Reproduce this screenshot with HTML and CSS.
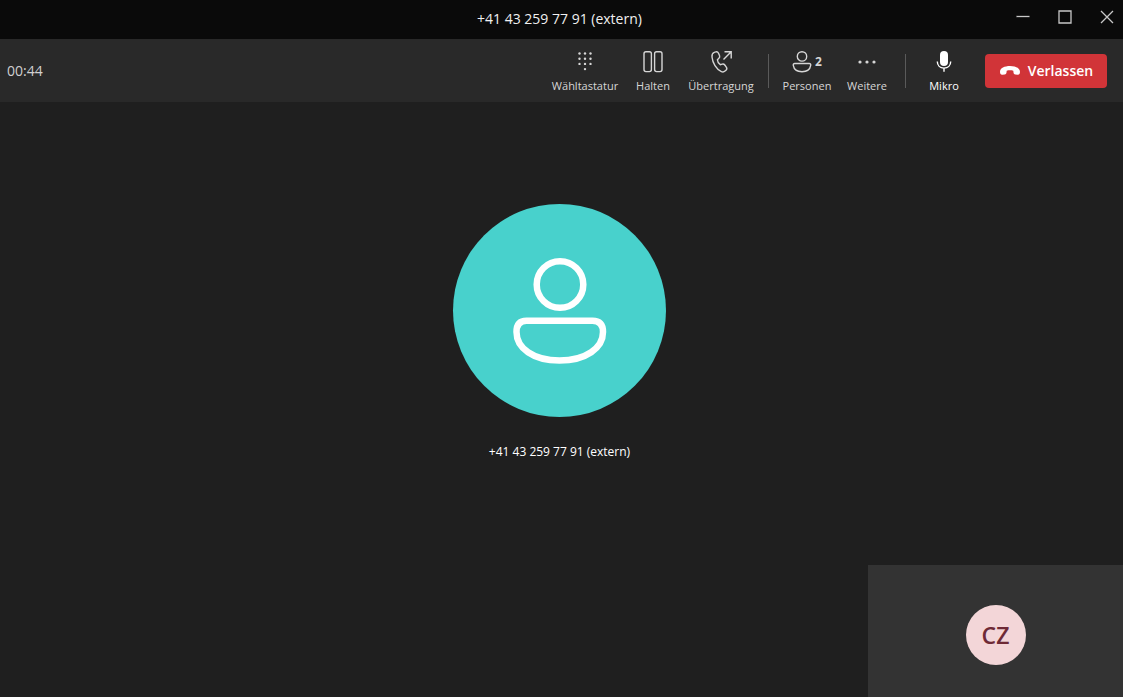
FILE: index.html
```html
<!DOCTYPE html>
<html lang="de">
<head>
<meta charset="utf-8">
<title>+41 43 259 77 91 (extern)</title>
<link rel="stylesheet" href="styles.css">
</head>
<body>
<div class="window">
  <header class="titlebar">
    <h1 class="titlebar-title">+41 43 259 77 91 (extern)</h1>
    <div class="window-controls">
      <button class="window-button" aria-label="Minimieren"><svg width="14" height="14" viewBox="0 0 14 14"><path d="M0.5 6.5h13"/></svg></button>
      <button class="window-button" aria-label="Maximieren"><svg width="14" height="14" viewBox="0 0 14 14"><path d="M1 1h12v12H1z"/></svg></button>
      <button class="window-button" aria-label="Schließen"><svg width="14" height="14" viewBox="0 0 14 14"><path d="M1 1l12 12M13 1L1 13"/></svg></button>
    </div>
  </header>

  <div class="toolbar">
    <time class="timer">00:44</time>
    <div class="tools">
      <div class="tool-group tool-group-call">
        <button class="tool">
          <svg class="tool-icon" width="24" height="24" viewBox="0 0 24 24"><g class="solid"><circle cx="6.500" cy="3.500" r="1.200"/><circle cx="12" cy="3.500" r="1.200"/><circle cx="17.500" cy="3.500" r="1.200"/><circle cx="6.500" cy="8.700" r="1.200"/><circle cx="12" cy="8.700" r="1.200"/><circle cx="17.500" cy="8.700" r="1.200"/><circle cx="6.500" cy="13.900" r="1.200"/><circle cx="12" cy="13.900" r="1.200"/><circle cx="17.500" cy="13.900" r="1.200"/><circle cx="12" cy="19.100" r="1.200"/></g></svg>
          <span class="tool-label">Wähltastatur</span>
        </button>
        <button class="tool">
          <svg class="tool-icon" width="24" height="24" viewBox="0 0 24 24"><rect x="3" y="1.800" width="7.400" height="19.800" rx="2"/><rect x="13.600" y="1.800" width="7.400" height="19.800" rx="2"/></svg>
          <span class="tool-label">Halten</span>
        </button>
        <button class="tool">
          <svg class="tool-icon" width="24" height="24" viewBox="0 0 24 24"><path d="M5.300 2.300l1.300-.4c1.200-.4 2.400.2 2.900 1.300l1 2.400c.4 1 .2 2-.6 2.700l-1.500 1.400c.1 1.500 1.500 4.100 2.900 5l1.900-.6c1-.3 2 .1 2.600.9l1.500 2.100c.7 1 .6 2.300-.3 3.100l-1 .9c-1 .9-2.400 1.100-3.600.5-5.200-2.500-8.800-8.700-9.400-14.600-.2-2 .6-4.100 2.300-4.700z"/><path d="M14.500 9.500L22.200 1.800M15.500 1.800h6.700v6.700"/></svg>
          <span class="tool-label">Übertragung</span>
        </button>
      </div>
      <div class="separator"></div>
      <div class="tool-group">
        <button class="tool tool-narrow">
          <span class="people">
            <svg class="tool-icon" width="20" height="24" viewBox="0 0 20 24"><circle cx="10" cy="6.400" r="4.700"/><path d="M2.800 13.500h14.400c1.100 0 1.700.8 1.500 1.900-.6 3.800-4 6.300-8.700 6.300s-8.100-2.500-8.700-6.300c-.2-1.100.4-1.900 1.500-1.900z"/></svg>
            <span class="people-count">2</span>
          </span>
          <span class="tool-label">Personen</span>
        </button>
        <button class="tool tool-narrow">
          <svg class="tool-icon" width="24" height="24" viewBox="0 0 24 24"><g class="solid"><circle cx="5" cy="12" r="1.600"/><circle cx="12" cy="12" r="1.600"/><circle cx="19" cy="12" r="1.600"/></g></svg>
          <span class="tool-label">Weitere</span>
        </button>
      </div>
      <div class="separator"></div>
      <button class="tool tool-narrow tool-active">
        <svg class="tool-icon" width="24" height="24" viewBox="0 0 24 24"><rect class="solid" x="8" y="1" width="8" height="15" rx="4"/><path d="M5.300 11.500c0 4 2.700 6.600 6.700 6.600s6.700-2.600 6.700-6.600M12 18v3.800"/></svg>
        <span class="tool-label">Mikro</span>
      </button>
      <button class="leave">
        <svg class="leave-icon" width="22" height="12" viewBox="0 0 22 12"><path d="M11 1C5.600 1 1 3.100 1 6.800c0 2.100.9 3.200 2.400 3l2.300-.4c1.200-.2 1.700-.8 1.800-1.900l.2-1.800c2.100-.6 4.500-.6 6.600 0l.2 1.800c.1 1.100.6 1.700 1.800 1.900l2.300.4c1.500.2 2.400-.9 2.400-3C21 3.100 16.400 1 11 1z"/></svg>
        <span>Verlassen</span>
      </button>
    </div>
  </div>

  <main class="stage">
    <figure class="participant">
      <div class="avatar">
        <svg width="106" height="108" viewBox="0 0 106 108"><circle cx="53" cy="27.500" r="23.300"/><path d="M19.500 63.700h66c7.500 0 10.500 4.500 10.500 11.300 0 16-17 28.500-43.500 28.500S9.500 91 9.500 75c0-7 3-11.300 10-11.300z"/></svg>
      </div>
      <figcaption class="participant-name">+41 43 259 77 91 (extern)</figcaption>
    </figure>
    <aside class="self-view">
      <div class="self-avatar">CZ</div>
    </aside>
  </main>
</div>
</body>
</html>
```
FILE: styles.css
```css
* {
  box-sizing: border-box;
}

body {
  margin: 0;
  background: #1f1f1f;
  color: #fff;
  font-family: "Open Sans", "Noto Sans", sans-serif;
}

button {
  border: 0;
  padding: 0;
  background: none;
  color: inherit;
  font-family: inherit;
}

svg {
  display: block;
}

.window {
  display: flex;
  flex-direction: column;
  min-height: 100vh;
}

.titlebar {
  display: grid;
  grid-template-columns: 1fr auto 1fr;
  align-items: center;
  height: 39px;
  padding: 0 9px 2px 5px;
  background: #0a0a0a;
}

.titlebar-title {
  grid-column: 2;
  margin: 0;
  font-size: 14px;
  font-weight: 400;
  line-height: 20px;
  color: #f0f0f0;
}

.window-controls {
  display: flex;
  justify-content: flex-end;
  gap: 28px;
  padding-bottom: 4px;
}

.window-button svg {
  fill: none;
  stroke: #c8c8c8;
  stroke-width: 1.3;
}

.toolbar {
  display: flex;
  align-items: center;
  justify-content: space-between;
  height: 63px;
  padding: 0 16px 0 7px;
  background: #292929;
}

.timer {
  font-size: 14px;
  line-height: 20px;
  color: #d0d0d0;
}

.tools {
  display: flex;
  align-items: center;
}

.tool-group {
  display: flex;
}

.tool-group-call {
  margin-right: 5px;
}

.tool {
  display: flex;
  flex-direction: column;
  align-items: center;
  gap: 4px;
  width: 68px;
  padding-top: 2px;
  color: #d6d6d6;
}

.tool-narrow {
  width: 60px;
}

.tool-active {
  color: #fff;
}

.tool-icon {
  fill: none;
  stroke: currentColor;
  stroke-width: 1.4;
}

.tool-icon .solid {
  fill: currentColor;
  stroke: none;
}

.tool-label {
  font-size: 11px;
  line-height: 16px;
}

.people {
  display: flex;
  align-items: center;
  gap: 3px;
}

.people-count {
  font-size: 12px;
  font-weight: 700;
  line-height: 16px;
}

.separator {
  width: 1px;
  height: 34px;
  margin: 0 8px;
  background: #5a5a5a;
}

.leave {
  display: flex;
  align-items: center;
  justify-content: center;
  gap: 7px;
  width: 122px;
  height: 34px;
  margin-left: 11px;
  border-radius: 4px;
  background: #d13438;
  font-size: 14px;
  font-weight: 600;
}

.leave-icon {
  fill: #fff;
}

.stage {
  position: relative;
  flex: 1;
  padding: 102px 4px 0 0;
}

.participant {
  display: flex;
  flex-direction: column;
  align-items: center;
  gap: 25px;
  margin: 0;
}

.avatar {
  display: flex;
  align-items: center;
  justify-content: center;
  width: 213px;
  height: 213px;
  border-radius: 50%;
  background: #48d1cc;
}

.avatar svg {
  fill: none;
  stroke: #fff;
  stroke-width: 6.5;
}

.participant-name {
  font-size: 12px;
  line-height: 20px;
}

.self-view {
  position: absolute;
  right: 0;
  bottom: 0;
  display: flex;
  align-items: center;
  justify-content: center;
  width: 255px;
  height: 132px;
  padding-top: 8px;
  background: #333;
}

.self-avatar {
  display: flex;
  align-items: center;
  justify-content: center;
  width: 60px;
  height: 60px;
  border-radius: 50%;
  background: #f3d6d8;
  color: #6e2a36;
  font-size: 23px;
  font-weight: 600;
}
```
